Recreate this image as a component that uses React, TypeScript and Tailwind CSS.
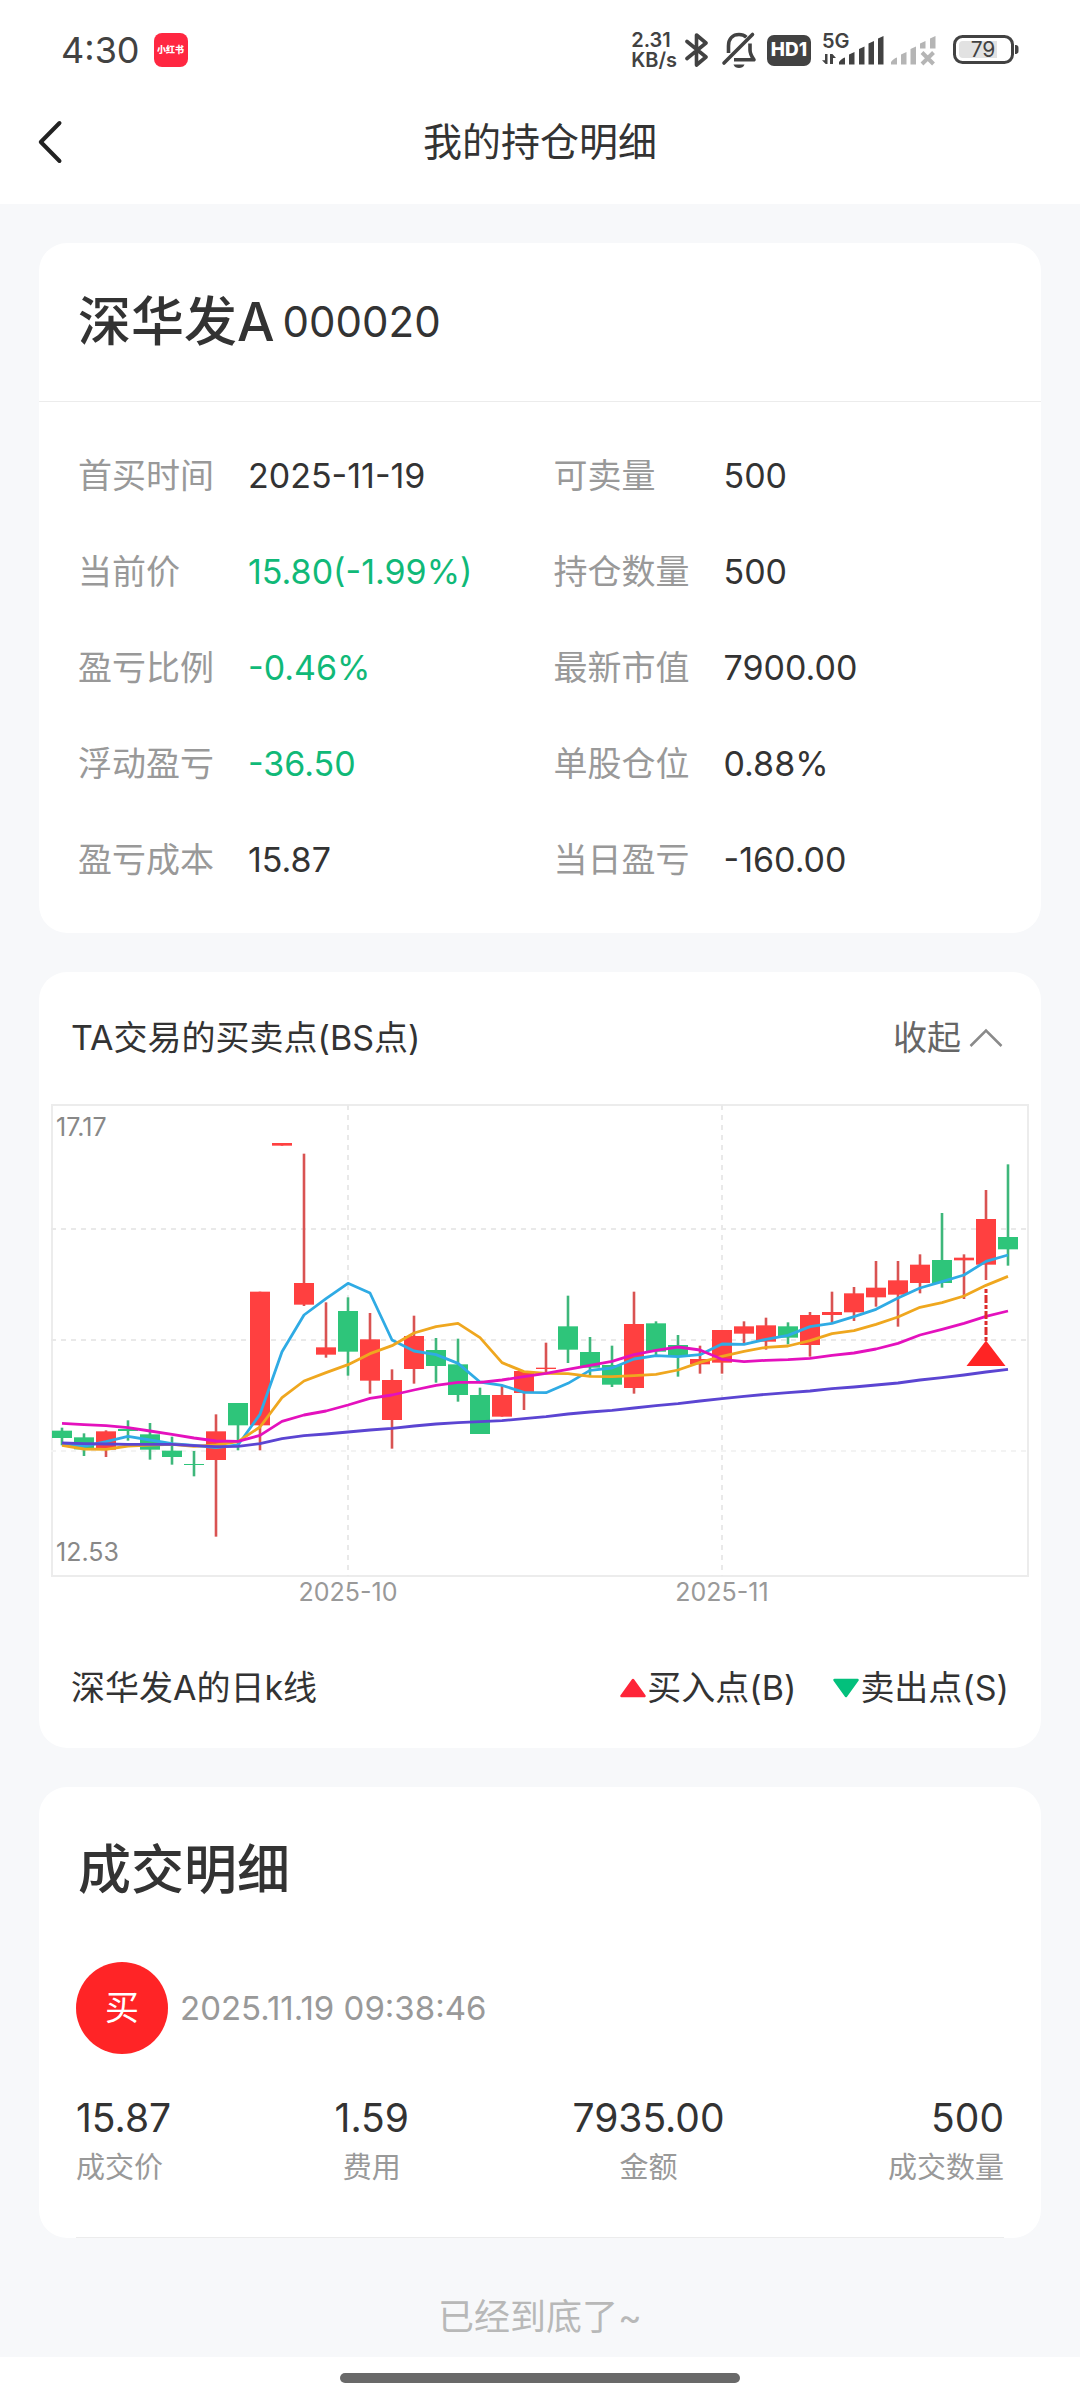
import { Fragment } from "react";

type Field = {
  label: string;
  value: string;
  down?: boolean;
};

const fields: Field[] = [
  { label: "首买时间", value: "2025-11-19" },
  { label: "可卖量", value: "500" },
  { label: "当前价", value: "15.80(-1.99%)", down: true },
  { label: "持仓数量", value: "500" },
  { label: "盈亏比例", value: "-0.46%", down: true },
  { label: "最新市值", value: "7900.00" },
  { label: "浮动盈亏", value: "-36.50", down: true },
  { label: "单股仓位", value: "0.88%" },
  { label: "盈亏成本", value: "15.87" },
  { label: "当日盈亏", value: "-160.00" },
];

const deal = [
  { label: "成交价", value: "15.87", align: "text-left" },
  { label: "费用", value: "1.59", align: "text-center" },
  { label: "金额", value: "7935.00", align: "text-center" },
  { label: "成交数量", value: "500", align: "text-right" },
];

/** [direction, high, body top, body bottom, low] */
type Candle = ["r" | "g", number, number, number, number];

const candles: Candle[] = [
  ["g", 1010, 1019, 1041, 1063],
  ["g", 1027, 1039, 1075, 1095],
  ["r", 1018, 1021, 1076, 1098],
  ["g", 988, 1014, 1020, 1049],
  ["g", 996, 1030, 1076, 1106],
  ["g", 1037, 1079, 1098, 1121],
  ["g", 1080, 1119, 1122, 1156],
  ["r", 970, 1021, 1107, 1337],
  ["g", 936, 936, 1003, 1078],
  ["r", 602, 602, 1003, 1078],
  ["r", 156, 156, 164, 164],
  ["r", 188, 576, 641, 645],
  ["r", 634, 769, 791, 800],
  ["g", 619, 660, 782, 854],
  ["r", 666, 745, 869, 908],
  ["r", 835, 867, 987, 1073],
  ["r", 674, 735, 834, 878],
  ["g", 741, 777, 825, 875],
  ["g", 743, 820, 912, 932],
  ["g", 890, 912, 1029, 1029],
  ["r", 884, 912, 977, 977],
  ["r", 840, 840, 906, 957],
  ["r", 755, 830, 834, 845],
  ["g", 614, 706, 776, 816],
  ["g", 738, 783, 830, 855],
  ["g", 764, 822, 881, 888],
  ["r", 602, 699, 891, 908],
  ["g", 691, 697, 782, 795],
  ["g", 732, 762, 795, 857],
  ["r", 764, 804, 820, 848],
  ["r", 717, 717, 815, 848],
  ["r", 691, 706, 728, 757],
  ["r", 680, 703, 752, 776],
  ["g", 694, 706, 740, 760],
  ["r", 663, 672, 762, 797],
  ["r", 602, 663, 672, 695],
  ["r", 588, 607, 664, 690],
  ["r", 510, 590, 619, 647],
  ["r", 510, 568, 611, 707],
  ["r", 490, 521, 576, 607],
  ["g", 366, 507, 576, 590],
  ["r", 490, 500, 508, 624],
  ["r", 297, 384, 521, 567],
  ["g", 220, 438, 475, 524],
];

const averages = [
  {
    color: "#2fabe4",
    values: [
      1057, 1066, 1052, 1036, 1047, 1058, 1063, 1070, 1062, 970, 782, 672, 623, 577, 606,
      747, 780, 791, 817, 873, 883, 904, 905, 877, 838, 831, 804, 794, 797, 791, 759, 760,
      745, 733, 707, 697, 677, 655, 621, 591, 572, 552, 511, 492,
    ],
  },
  {
    color: "#efa71f",
    values: [
      1063, 1074, 1075, 1065, 1062, 1060, 1066, 1062, 1052, 1008, 920, 870, 845, 821, 788,
      764, 726, 707, 697, 740, 815, 842, 847, 848, 856, 857, 854, 850, 837, 814, 796, 781,
      769, 765, 749, 728, 719, 700, 678, 649, 635, 615, 583, 556,
    ],
  },
  {
    color: "#e411bd",
    values: [
      997, 1001, 1004, 1010, 1020, 1030, 1041, 1050, 1051, 1033, 991, 972, 960, 942, 922,
      912, 897, 883, 874, 874, 867, 857, 847, 835, 823, 811, 791, 778, 768, 777, 805, 812,
      808, 806, 802, 793, 786, 774, 757, 732, 715, 697, 676, 660,
    ],
  },
  {
    color: "#5b45d2",
    values: [
      1056, 1058, 1059, 1060, 1060, 1060, 1064, 1067, 1066, 1058, 1043, 1034, 1029, 1023,
      1017, 1012, 1005, 999, 995, 992, 989, 983, 977, 969, 963, 958, 951, 944, 938, 930,
      923, 916, 910, 905, 900, 893, 888, 882, 876, 867, 860, 852, 843, 835,
    ],
  },
];

// Series are stored at 3x, with the frame's top edge at 39.
const toY = (v: number) => (v - 39) / 3;
const toX = (i: number) => 11 + i * 22;

const months = [
  { label: "2025-10", index: 13 },
  { label: "2025-11", index: 30 },
];

export default function App() {
  return (
    <div className="bg-white font-['Inter','Noto_Sans_CJK_SC',sans-serif] text-[#333]">
      <header className="pb-5">
        <StatusBar />
        <div className="relative flex h-[84px] items-center justify-center">
          <button type="button" aria-label="返回" className="absolute left-[37px] p-0">
            <svg width="26" height="44" viewBox="0 0 26 44" fill="none" className="block">
              <path d="M22.5 3 3.8 22 22.5 41" stroke="#222" strokeWidth="4" strokeLinecap="round" strokeLinejoin="round" />
            </svg>
          </button>
          <h1 className="text-[39px] leading-[56px]">我的持仓明细</h1>
        </div>
      </header>

      <main className="flex flex-col gap-[39px] bg-[#f7f8fa] px-[39px] pt-[39px] pb-4">
        <Position />
        <KLine />
        <Deals />
        <p className="mt-4 text-center text-[36px] leading-[48px] text-[#b8b8b8]">已经到底了~</p>
      </main>

      <div className="flex h-[42px] justify-center pt-4">
        <div className="h-[10px] w-[37%] rounded-full bg-[#696969]" />
      </div>
    </div>
  );
}

function Position() {
  return (
    <section className="rounded-[28px] bg-white">
      <div className="flex h-[159px] items-center gap-2 border-b border-[#ececec] px-[39px]">
        <h2 className="text-[53px] leading-[64px] font-medium">深华发A</h2>
        <span className="text-[42px] leading-[64px]">000020</span>
      </div>
      <dl className="grid grid-cols-2 gap-y-10 pt-[46px] pr-3 pb-[45px] pl-[39px] text-[34px] leading-[56px]">
        {fields.map((f) => (
          <div key={f.label} className="flex">
            <dt className="w-[170px] text-[#999]">{f.label}</dt>
            <dd className={f.down ? "text-[#10b978]" : ""}>{f.value}</dd>
          </div>
        ))}
      </dl>
    </section>
  );
}

function KLine() {
  return (
    <section className="rounded-[28px] bg-white px-3 text-[34px] leading-[48px]">
      <div className="flex h-[132px] items-center justify-between pr-[26px] pl-5">
        <h2>TA交易的买卖点(BS点)</h2>
        <button type="button" className="flex items-center gap-2 text-[#666]">
          收起
          <svg width="34" height="20" viewBox="0 0 34 20" fill="none">
            <path d="M1.5 18 17 2.5 32.5 18" stroke="#8a8a8a" strokeWidth="2.5" />
          </svg>
        </button>
      </div>
      <Chart />
      <div className="flex h-[120px] items-center justify-between pr-5 pl-5">
        <span>深华发A的日k线</span>
        <div className="flex gap-9">
          <span className="flex items-center">
            <svg width="28" height="20" viewBox="0 0 28 20">
              <path d="M14 2 25.5 18H2.5Z" fill="#fe2539" stroke="#fe2539" strokeWidth="2.5" strokeLinejoin="round" />
            </svg>
            买入点(B)
          </span>
          <span className="flex items-center">
            <svg width="28" height="20" viewBox="0 0 28 20">
              <path d="M14 18 2.5 2h23Z" fill="#03c07c" stroke="#03c07c" strokeWidth="2.5" strokeLinejoin="round" />
            </svg>
            卖出点(S)
          </span>
        </div>
      </div>
    </section>
  );
}

function Chart() {
  return (
    <svg viewBox="0 0 978 524" className="block h-auto w-full" role="img" aria-label="深华发A的日k线">
      <rect x="1" y="1" width="976" height="471" fill="none" stroke="#ececec" strokeWidth="2" />
      <g stroke="#e9e9e9" strokeWidth="2" strokeDasharray="5 5">
        <path d="M0 125H977M0 236H977" />
        <path d="M0 347H977" stroke="#f3f3f3" />
        {months.map((m) => (
          <path key={m.label} d={`M${toX(m.index)} 1V472`} />
        ))}
      </g>

      {candles.map(([dir, high, top, bottom, low], i) => (
        <Fragment key={i}>
          <path d={`M${toX(i)} ${toY(high)}V${toY(low)}`} stroke={dir === "r" ? "#d95352" : "#3eb77b"} strokeWidth="2.6" />
          <rect
            x={toX(i) - 10}
            y={toY(top)}
            width="20"
            height={(bottom - top) / 3}
            fill={dir === "r" ? "#ff4040" : "#2ec57a"}
          />
        </Fragment>
      ))}

      {averages.map((a) => (
        <polyline
          key={a.color}
          points={a.values.map((v, i) => `${toX(i)},${toY(v)}`).join(" ")}
          fill="none"
          stroke={a.color}
          strokeWidth="2.8"
          strokeLinejoin="round"
        />
      ))}

      {/* buy point */}
      <path d="M935 185v53" stroke="#dd2c2c" strokeWidth="3" strokeDasharray="4 2 8 2" />
      <path d="M935 236.5 954.5 262h-39Z" fill="#ff2424" />

      <g fontSize="25" fill="#888">
        <text x="5" y="32">17.17</text>
        <text x="5" y="457">12.53</text>
      </g>
      <g fontSize="25" fill="#999" textAnchor="middle">
        {months.map((m) => (
          <text key={m.label} x={toX(m.index)} y="497">
            {m.label}
          </text>
        ))}
      </g>
    </svg>
  );
}

function Deals() {
  return (
    <section className="rounded-[28px] bg-white px-[37px] pt-[51px]">
      <h2 className="pl-[2px] text-[53px] leading-[64px] font-medium">成交明细</h2>
      <div className="mt-[60px] flex items-center gap-3">
        <span className="flex h-[92px] w-[92px] items-center justify-center rounded-full bg-[#ff2426] text-[34px] leading-[48px] text-white">
          买
        </span>
        <time className="text-[33px] leading-[48px] text-[#999]">2025.11.19 09:38:46</time>
      </div>
      <dl className="mt-10 flex justify-between border-b border-[#ececec] pb-[49px]">
        {deal.map((d) => (
          <div key={d.label} className={`flex flex-col-reverse gap-[6px] ${d.align}`}>
            <dt className="text-[29px] leading-[40px] text-[#999]">{d.label}</dt>
            <dd className="text-[39px] leading-[48px]">{d.value}</dd>
          </div>
        ))}
      </dl>
    </section>
  );
}

function StatusBar() {
  return (
    <div className="flex h-[100px] items-center justify-between px-[61px] text-[#424242]">
      <div className="flex items-center gap-[14px]">
        <span className="text-[36px] leading-[48px]">4:30</span>
        <span className="flex h-[34px] w-[34px] items-center justify-center rounded-[8px] bg-[#ff2741] text-[9px] leading-[12px] font-black whitespace-nowrap text-white">
          小红书
        </span>
      </div>

      <div className="flex items-center">
        <div className="mr-2 text-[20px] leading-[20px] font-semibold">
          <div>2.31</div>
          <div>KB/s</div>
        </div>
        {/* bluetooth */}
        <svg width="24" height="36" viewBox="0 0 24 36" fill="none" className="mr-3">
          <path d="M2 9.5 21 25 11.5 33V3L21 11 2 26.5" stroke="currentColor" strokeWidth="3.6" strokeLinejoin="round" strokeLinecap="round" />
        </svg>
        {/* muted bell */}
        <svg width="36" height="38" viewBox="0 0 36 38" fill="none" className="mr-[10px]">
          <g stroke="currentColor" strokeWidth="3.6">
            <path d="M7.5 22V15C7.5 7.5 12 3.5 18 3.5c3 0 5.5 1 7.4 2.8" />
            <path d="M29 12.5V19c0 4 2 7 4 9.8H13" strokeLinejoin="round" />
            <path d="M3 32 31.5 3.5" strokeLinecap="round" />
          </g>
          <path d="M12.5 33.5h11c-1 2.6-3 3.5-5.5 3.5s-4.5-.9-5.5-3.5Z" fill="currentColor" />
        </svg>
        <span className="mr-[11px] flex h-[31px] w-[44px] items-center justify-center rounded-[7px] bg-[#424242] text-[19px] leading-[24px] font-extrabold text-white">
          HD1
        </span>
        {/* 5G signal */}
        <svg width="62" height="40" viewBox="0 -4 62 40" fill="currentColor" className="mr-[7px]">
          <text x="0" y="14" fontSize="20" fontWeight="600">
            5G
          </text>
          <path d="M5.5 20v10H3.7L0 26.2h3V20ZM8 30V20h2.4l3.6 4h-3v6Z" />
          <path d="M17 30.5v-2.5c2-2.5 4-4 6-4.5v7ZM27 30.5V20.5l5.5-2.5v12.5ZM37 30.5V15l5.5-2.5v18ZM46.5 30.5V9.5L52 7v23.5ZM56 30.5V4.5L61.5 2v28.5Z" />
        </svg>
        {/* no second sim */}
        <svg width="45" height="32" viewBox="0 0 45 32" fill="#b5b5b5" className="mr-[17px]">
          <path d="M0 30.5v-2.5c2-2.5 4-4 6-4.5v7ZM10 30.5V20.5l5.5-2.5v12.5ZM19.5 30.5V15l5.5-2.5v18ZM29 14.5V9.5L34.5 7v7.5ZM39 14.5V4.5L44.5 2v12.5Z" />
          <path d="M31 18.5 42.5 30M42.5 18.5 31 30" stroke="#b5b5b5" strokeWidth="4" />
        </svg>
        {/* battery */}
        <svg width="66" height="30" viewBox="0 0 66 30">
          <rect x="1.5" y="1.5" width="58" height="26" rx="8" fill="none" stroke="currentColor" strokeWidth="3" />
          <path d="M10 6h34v17H10a4 4 0 0 1-4-4v-9a4 4 0 0 1 4-4Z" fill="#e2e2e2" />
          <path d="M62 10c2.5 0 3.5 1 3.5 3v3c0 2-1 3-3.5 3Z" fill="currentColor" />
          <text x="30" y="22" fontSize="21" fill="currentColor" textAnchor="middle">
            79
          </text>
        </svg>
      </div>
    </div>
  );
}
